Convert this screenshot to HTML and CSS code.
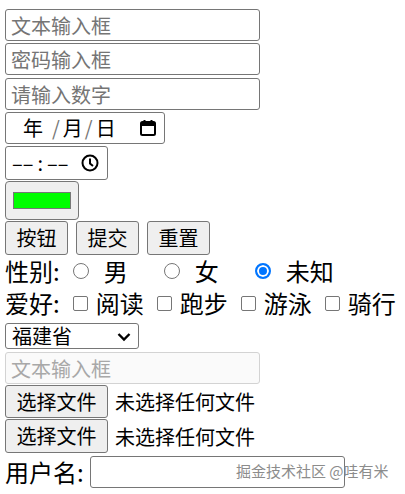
FILE: index.html
```html
<!DOCTYPE html>
<html lang="zh-CN">
<head>
    <meta charset="UTF-8">
    <meta name="viewport" content="width=device-width, initial-scale=1.0">
    <title>表单控件</title>
    <link rel="stylesheet" href="styles.css">
</head>
<body>
    <form class="form">
        <input class="field" type="text" placeholder="文本输入框">
        <input class="field pwd" type="password" placeholder="密码输入框">
        <input class="field num" type="text" placeholder="请输入数字">
        <div class="date">
            <span class="part">年</span><span class="sep first">/</span><span class="part">月</span><span class="sep">/</span><span class="part">日</span>
            <svg class="picker" viewBox="0 0 18 18" width="18" height="18">
                <rect x="2" y="3" width="14" height="13" rx="1.5" fill="none" stroke="#000" stroke-width="2"/>
                <rect x="2" y="3" width="14" height="4" fill="#000"/>
                <rect x="4.5" y="1" width="2" height="3" fill="#000"/>
                <rect x="11.5" y="1" width="2" height="3" fill="#000"/>
            </svg>
        </div>
        <div class="time">
            <span>––</span><span class="colon">:</span><span>––</span>
            <svg class="picker" viewBox="0 0 18 18" width="18" height="18">
                <circle cx="9" cy="9" r="7.5" fill="none" stroke="#000" stroke-width="2"/>
                <path d="M9 4.5V9.5L12 12" fill="none" stroke="#000" stroke-width="2"/>
            </svg>
        </div>
        <input class="color" type="color" value="#00ff00">
        <div class="buttons">
            <button class="btn" type="button">按钮</button>
            <button class="btn" type="submit">提交</button>
            <button class="btn" type="reset">重置</button>
        </div>
        <div class="choice">
            <span class="title">性别:</span>
            <label class="radio"><input type="radio" name="sex">男</label>
            <label class="radio"><input type="radio" name="sex">女</label>
            <label class="radio"><input type="radio" name="sex" checked>未知</label>
        </div>
        <div class="choice hobby">
            <span class="title">爱好:</span>
            <label class="check"><input type="checkbox">阅读</label>
            <label class="check"><input type="checkbox">跑步</label>
            <label class="check"><input type="checkbox">游泳</label>
            <label class="check"><input type="checkbox">骑行</label>
        </div>
        <div class="select-wrap">
            <select class="select">
                <option>福建省</option>
                <option>浙江省</option>
                <option>广东省</option>
            </select>
            <svg class="arrow" viewBox="0 0 14 10" width="14" height="10">
                <path d="M1.5 2L7 7.5L12.5 2" fill="none" stroke="#000" stroke-width="2.4"/>
            </svg>
        </div>
        <input class="field off" type="text" placeholder="文本输入框" disabled>
        <div class="file">
            <button class="file-btn" type="button">选择文件</button>
            <span>未选择任何文件</span>
        </div>
        <div class="file second">
            <button class="file-btn" type="button">选择文件</button>
            <span>未选择任何文件</span>
        </div>
        <div class="user">
            <label for="username">用户名:</label>
            <input class="field" id="username" type="text">
        </div>
    </form>
    <div class="mark">掘金技术社区 @哇有米</div>
</body>
</html>
```

FILE: styles.css
```css
body {
    font-family: "Noto Sans CJK SC", "Liberation Sans", sans-serif;
    font-size: 24px;
    color: #000;
    background-color: #fff;
    margin: 0;
    padding: 9px 5px 0;
    position: relative;
}
.form {
    display: flex;
    flex-direction: column;
    align-items: flex-start;
}
input, select, button {
    font-family: inherit;
    font-size: 20px;
    color: #000;
}
.field {
    width: 255px;
    height: 32px;
    box-sizing: border-box;
    border: 1px solid #767676;
    border-radius: 3px;
    padding: 0 5px;
    margin: 0 0 2px;
    outline: none;
}
.field::placeholder {
    color: #757575;
}
.pwd {
    margin-bottom: 3px;
}
.field.off {
    border-color: #d3d3d3;
    background-color: #fafafa;
    margin-bottom: 1px;
}
.field.off::placeholder {
    color: #a8a8a8;
}
.date, .time {
    display: flex;
    align-items: center;
    box-sizing: border-box;
    border: 1px solid #767676;
    border-radius: 3px;
    font-size: 20px;
    line-height: 1;
}
.date {
    width: 160px;
    height: 32px;
    padding: 0 7px 0 17px;
    margin-bottom: 2px;
}
.date .sep {
    color: #767676;
    margin: 0 3px 0 2px;
}
.date .sep.first {
    margin-left: 9px;
}
.time {
    width: 103px;
    height: 34px;
    padding: 0 8px 0 6px;
    margin-bottom: 1px;
}
.time .colon {
    margin: 0 4px;
}
.picker {
    margin-left: auto;
}
.color {
    width: 74px;
    height: 39px;
    box-sizing: border-box;
    margin: 0 0 1px;
    padding: 6px 5px;
    border: 1px solid #767676;
    border-radius: 4px;
    background-color: #efefef;
}
.buttons {
    display: flex;
    gap: 8px;
}
.btn, .file-btn {
    height: 34px;
    padding: 0;
    border: 1px solid #767676;
    border-radius: 3px;
    background-color: #efefef;
    line-height: 1;
}
.btn {
    width: 63px;
}
.choice {
    display: flex;
    align-items: center;
    height: 32px;
    line-height: 1;
}
.choice label {
    display: flex;
    align-items: center;
}
.title {
    margin-right: 13px;
}
.radio input, .check input {
    appearance: none;
    box-sizing: border-box;
    background-color: #fff;
    border: 1px solid #767676;
    flex-shrink: 0;
}
.radio input {
    width: 16px;
    height: 16px;
    border-radius: 50%;
    margin: 0 15px 0 0;
}
.radio input:checked {
    border: 2px solid #0075ff;
    background-color: #0075ff;
    box-shadow: inset 0 0 0 2px #fff;
}
.radio + .radio {
    margin-left: 36px;
}
.check input {
    width: 15px;
    height: 15px;
    border-radius: 2px;
    margin: 0 8px 0 0;
}
.check + .check {
    margin-left: 13px;
}
.hobby {
    margin-bottom: 4px;
}
.select-wrap {
    position: relative;
    margin-bottom: 3px;
}
.select {
    appearance: none;
    display: block;
    width: 134px;
    height: 26px;
    padding: 0 6px;
    border: 1px solid #767676;
    border-radius: 3px;
    background-color: #fff;
    line-height: 1;
}
.arrow {
    position: absolute;
    right: 8px;
    top: 9px;
    pointer-events: none;
}
.file {
    display: flex;
    align-items: center;
    font-size: 20px;
    gap: 7px;
    margin-bottom: 1px;
}
.file.second {
    margin-bottom: 3px;
}
.file-btn {
    width: 103px;
    height: 33px;
}
.second .file-btn {
    height: 34px;
}
.user {
    display: flex;
    align-items: center;
    gap: 6px;
    line-height: 1;
}
.user .field {
    margin: 0;
}
.mark {
    position: absolute;
    left: 236px;
    top: 460px;
    font-size: 15px;
    color: #8c8c8c;
    white-space: nowrap;
}
```
